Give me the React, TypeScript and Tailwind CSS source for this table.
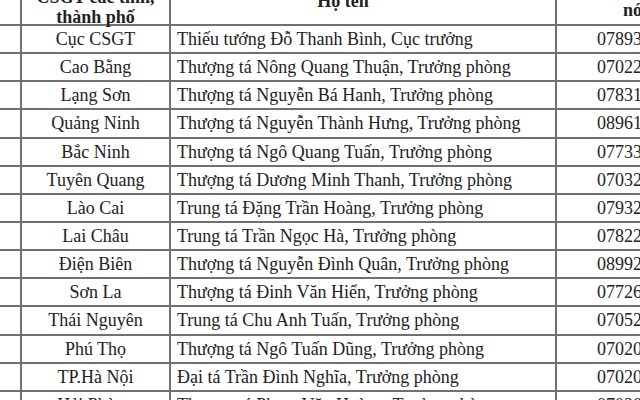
const rows = [
  { place: "Cục CSGT", name: "Thiếu tướng Đỗ Thanh Bình, Cục trưởng", phone: "0789333345" },
  { place: "Cao Bằng", name: "Thượng tá Nông Quang Thuận, Trưởng phòng", phone: "0702222346" },
  { place: "Lạng Sơn", name: "Thượng tá Nguyễn Bá Hanh, Trưởng phòng", phone: "0783111166" },
  { place: "Quảng Ninh", name: "Thượng tá Nguyễn Thành Hưng, Trưởng phòng", phone: "0896111144" },
  { place: "Bắc Ninh", name: "Thượng tá Ngô Quang Tuấn, Trưởng phòng", phone: "0773333127" },
  { place: "Tuyên Quang", name: "Thượng tá Dương Minh Thanh, Trưởng phòng", phone: "0703222113" },
  { place: "Lào Cai", name: "Trung tá Đặng Trần Hoàng, Trưởng phòng", phone: "0793222188" },
  { place: "Lai Châu", name: "Trung tá Trần Ngọc Hà, Trưởng phòng", phone: "0782222136" },
  { place: "Điện Biên", name: "Thượng tá Nguyễn Đình Quân, Trưởng phòng", phone: "0899222190" },
  { place: "Sơn La", name: "Thượng tá Đinh Văn Hiển, Trưởng phòng", phone: "0772666114" },
  { place: "Thái Nguyên", name: "Trung tá Chu Anh Tuấn, Trưởng phòng", phone: "0705222115" },
  { place: "Phú Thọ", name: "Thượng tá Ngô Tuấn Dũng, Trưởng phòng", phone: "0702000113" },
  { place: "TP.Hà Nội", name: "Đại tá Trần Đình Nghĩa, Trưởng phòng", phone: "0702000114" },
  { place: "Hải Phòng", name: "Thượng tá Phạm Văn Hoàng, Trưởng phòng", phone: "0702000115" },
]

const cols = "grid grid-cols-[22px_149px_386px_200px]"

export default function App() {
  return (
    <div
      className="h-[400px] w-[640px] overflow-hidden bg-white text-[18px] text-[#222]"
      style={{ fontFamily: '"Liberation Serif", "Times New Roman", serif' }}
    >
      <div className="-mt-[29px] w-[757px]">
        {/* header, top part is cut off by the crop */}
        <div className={`${cols} h-[55px] border-b-2 border-[#707070] font-bold leading-[20px]`}>
          <div className="border-r-2 border-[#707070]" />
          <div className="flex flex-col items-center justify-end border-r-2 border-[#707070]">
            <div className="flex translate-y-[3px] flex-col items-center">
              <span>CSGT các tỉnh,</span>
              <span>thành phố</span>
            </div>
          </div>
          <div className="flex items-center justify-center border-r-2 border-[#707070] pt-[7px] pr-[40px]">
            Họ tên
          </div>
          <div className="flex flex-col justify-end pb-[4px] pl-[66px]">
            <span className="leading-[26px]">Số điện thoại</span>
            <span>nóng</span>
          </div>
        </div>

        {rows.map((r) => (
          <div key={r.place} className={`${cols} h-[28.15px] border-b-2 border-[#707070] leading-none`}>
            <div className="border-r-2 border-[#707070]" />
            <div className="flex items-center justify-center border-r-2 border-[#707070]">{r.place}</div>
            <div className="flex items-center border-r-2 border-[#707070] pl-[6px]">{r.name}</div>
            <div className="flex items-center pl-[40px]">{r.phone}</div>
          </div>
        ))}
      </div>
    </div>
  )
}
